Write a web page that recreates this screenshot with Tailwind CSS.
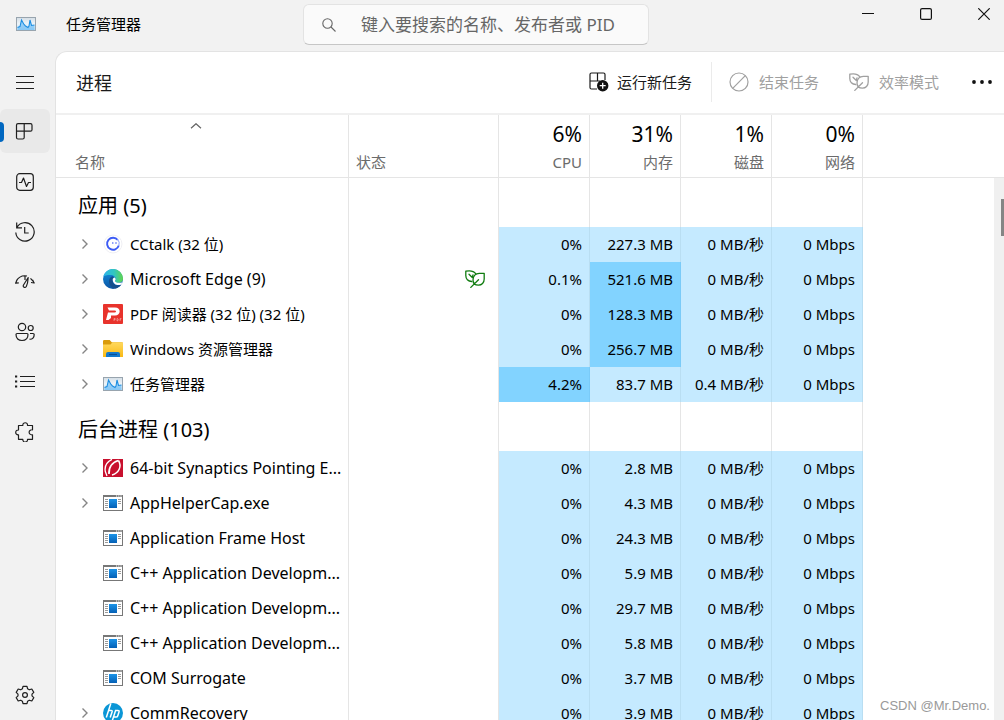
<!DOCTYPE html>
<html lang="zh-CN">
<head>
<meta charset="utf-8">
<title>任务管理器</title>
<script src="https://cdn.jsdelivr.net/npm/@tailwindcss/browser@4"></script>
</head>
<body class="h-screen overflow-hidden bg-[#f2f2f2] font-['Noto_Sans','Noto_Sans_CJK_SC',sans-serif] text-[15px] leading-5 text-black">

<svg class="absolute size-0" aria-hidden="true">
  <defs>
    <linearGradient id="gBlue" x1="0" y1="0" x2="0" y2="1"><stop offset="0" stop-color="#1c94e8"/><stop offset="1" stop-color="#0560b5"/></linearGradient>
    <linearGradient id="gGlass" x1="0" y1="0" x2="0" y2="1"><stop offset="0" stop-color="#d5dee6"/><stop offset=".5" stop-color="#edf4f9"/><stop offset="1" stop-color="#b5dcf7"/></linearGradient>
    <linearGradient id="gFolder" x1="0" y1="0" x2="0" y2="1"><stop offset="0" stop-color="#ffd95e"/><stop offset="1" stop-color="#f9b915"/></linearGradient>
    <linearGradient id="gEdge" x1="0" y1="0" x2="1" y2="0"><stop offset="0" stop-color="#2cb4ec"/><stop offset=".55" stop-color="#32c6c0"/><stop offset="1" stop-color="#62d64a"/></linearGradient>
    <linearGradient id="gEdgeB" x1="0" y1="0" x2="0" y2="1"><stop offset="0" stop-color="#1391e0"/><stop offset="1" stop-color="#0b54a4"/></linearGradient>

    <symbol id="taskmgr" viewBox="0 0 20 14">
      <rect x=".5" y=".5" width="19" height="13" fill="url(#gGlass)" stroke="#98a4ae"/>
      <path d="M1.5 10.5 4 9l1.5-6L8 8l2 1.5 2 1 1-1 1-6.5 1.5 5.5L18.5 8v5h-17z" fill="#6bbcf5" opacity=".65"/>
      <path d="M1.5 10.5 4 9.500l1.5-6.500L8 7.500l1.500 1.500 2.500 1.500 1-1.500 1-6 1.500 5.500 3-.5" fill="none" stroke="#1c8ee2" stroke-width="1.100"/>
    </symbol>
    <symbol id="cctalk" viewBox="0 0 20 20">
      <circle cx="10" cy="10" r="9" fill="#fff" stroke="#efeff3"/>
      <path d="M14.800 6A6 6 0 1 0 15.800 11.500" fill="none" stroke="#3d5cf5" stroke-width="1.900"/>
      <path d="M14.500 5.200a6.200 6.200 0 0 1 1.300 6.500" fill="none" stroke="#8ea2fb" stroke-width="1"/>
      <circle cx="9.800" cy="9" r=".8" fill="#3d5cf5"/><circle cx="13" cy="9" r=".8" fill="#3d5cf5"/>
    </symbol>
    <symbol id="edge" viewBox="0 0 20 20">
      <circle cx="10" cy="10" r="10" fill="url(#gEdgeB)"/>
      <path d="M.2 8A10 10 0 0 1 20 9.500c0 3-2.300 4.300-4.800 4.200-1.800 0-3.200-.7-3.200-1.300 0-.5.800-.8.800-2.200C12.800 8 10.500 6 7.500 6 4 6 1 6.500.2 8z" fill="url(#gEdge)"/>
      <path d="M9.200 7.300C5.500 9 5 13.500 8 17.500c1.500 1.700 3.800 2.400 5.500 1.700 2-.8 3.800-2.200 4.700-3.500-3 1.500-8 .8-8.500-2.700-.2-1.900.8-2.800 1.500-3.200 0-1.200-.8-2.300-2-2.500z" fill="#164f8c"/>
      <path d="M9.700 10.500c.1-1 .9-1.900 1.800-2 1 .7 1.500 1.700 1 2.600-.4.600-.8 1-.4 1.500 1 1.300 3.200 1.400 5.400 1.100 1-.2 1.700-.4 2-.7-.3 1.200-.8 2-1.300 2.500-3 1.500-8.300.4-8.500-5z" fill="#fff"/>
    </symbol>
    <symbol id="pdf" viewBox="0 0 20 20">
      <rect width="20" height="20" rx="1" fill="#e8332c"/>
      <path d="M4.500 3.500h7.500c6.500 0 6 8 0 8H8v2.500l-2.500 2H3l2-7.500h6.500c2 0 2-2 .2-2H6z" fill="#fff"/>
      <path d="M11 14.500v2.500m0-2.500h1.200v1.200H11m3-1.200v2.500c1.800 0 1.800-2.500 0-2.500m3 2.500v-2.500h1.500m-1.500 1.200h1" fill="none" stroke="#fff" stroke-width=".6" opacity=".6"/>
    </symbol>
    <symbol id="folder" viewBox="0 0 20 18">
      <path d="M0 1.200Q0 0 1.200 0h5.500l2 2.200H18.500Q20 2.200 20 3.600V9H0z" fill="#d99b0b"/>
      <path d="M0 4.500h7.500l2-2.300H19q1 0 1 1V17H0z" fill="url(#gFolder)"/>
      <path d="M3 17v-3q0-2 2-2h10q2 0 2 2v3z" fill="#1279cf"/>
      <path d="M6 14.500h8" stroke="#0a4f94" stroke-width="1.200"/>
    </symbol>
    <symbol id="syn" viewBox="0 0 20 18">
      <rect width="20" height="18" fill="#c8102e"/>
      <path d="M9 .3C3.500 3 1.500 8 2.300 12.500L4 17" fill="none" stroke="#fff" stroke-width="1.300"/>
      <path d="M15.500 1.500C9 3 5.500 8.500 6 15" fill="none" stroke="#fff" stroke-width="1.700"/>
      <path d="M15.500 1.500c3.500 6 .5 12.500-6.500 14.500" fill="none" stroke="#fff" stroke-width="1.500"/>
    </symbol>
    <symbol id="exe" viewBox="0 0 20 16">
      <rect x=".5" y=".5" width="19" height="15" fill="#fff" stroke="#777"/>
      <path d="M0 1h20" stroke="#777" stroke-width="2"/>
      <path d="M13 1h1.200M15.200 1h1.200M17.400 1h1.200" stroke="#fff" stroke-width="1"/>
      <path d="M2 4.500h3M2 6.500h3M2 8.500h3M2 10.500h3M2 12.500h3M15 4.500h3M15 6.500h3M15 8.500h3" stroke="#9a9a9a" stroke-width="1"/>
      <rect x="6" y="4" width="8" height="9" fill="url(#gBlue)"/>
    </symbol>
    <symbol id="hp" viewBox="0 0 20 20">
      <circle cx="10" cy="10" r="10" fill="#0a96d6"/>
      <path d="M7.800.5 3.300 14.500M5.600 7.500h2.500q1.400 0 1 1.300L7.200 14.500M8.700 19.500 12.600 7.400h2.300q1.600 0 1.100 1.500l-1.300 4q-.4 1.200-1.700 1.200h-2" fill="none" stroke="#fff" stroke-width="1.500"/>
    </symbol>
    <symbol id="leaf" viewBox="0 0 20 18">
      <g fill="none" stroke="currentColor" stroke-width="1.300" stroke-linecap="round" stroke-linejoin="round">
        <path d="M6.800 11.500C3 11.500.8 9 .8 5.500V1.200C5 .3 8.800 1 10.800 3.800"/>
        <path d="M4 4.200 7.300 7.500M8 4.800 7.300 7.500"/>
        <path d="M19.200 3.300V9c0 3.800-2.500 6.200-5.700 6.200-3.500 0-5.500-2.300-5.500-5.300 0-3.900 2.500-6.600 6.300-6.600zM5.800 17.400 13.500 9.800"/>
      </g>
    </symbol>
    <symbol id="chev" viewBox="0 0 8 12"><path d="M1.500 1.500 6 6l-4.500 4.500" fill="none" stroke="#858585" stroke-width="1.400"/></symbol>
  </defs>
</svg>

<div class="flex h-full flex-col">
  <header class="flex h-[51px] shrink-0 items-start">
    <div class="flex h-12 w-[303px] shrink-0 items-center gap-[30px] pl-4">
      <svg class="h-3.5 w-5"><use href="#taskmgr"/></svg>
      <h1>任务管理器</h1>
    </div>
    <label class="mt-1 flex h-[41px] w-[346px] items-center gap-[25px] rounded-md border border-[#e3e3e3] border-b-[#c6c6c6] bg-[#fafafa] pl-[18px]">
      <svg class="size-[14px] shrink-0" viewBox="0 0 14 14" fill="none" stroke="#666" stroke-width="1.100"><circle cx="5.500" cy="5.500" r="4.700"/><path d="m9 9 4.500 4.500"/></svg>
      <input type="text" aria-label="搜索" placeholder="键入要搜索的名称、发布者或 PID" class="w-full bg-transparent text-[17px] leading-6 outline-none placeholder:text-[#666]">
    </label>
    <div class="ml-auto flex gap-[46px] pt-2 pr-3.5">
      <button type="button" aria-label="最小化"><svg class="size-3" viewBox="0 0 12 12" stroke="#111" fill="none"><path d="M0 5.500h12"/></svg></button>
      <button type="button" aria-label="最大化"><svg class="size-3" viewBox="0 0 12 12" stroke="#111" fill="none"><rect x=".6" y=".6" width="10.800" height="10.800" rx="1.500" stroke-width="1.200"/></svg></button>
      <button type="button" aria-label="关闭"><svg class="size-3" viewBox="0 0 12 12" stroke="#111" fill="none"><path d="m.3.3 11.400 11.400M11.700.3.3 11.700" stroke-width="1.200"/></svg></button>
    </div>
  </header>

  <div class="flex min-h-0 flex-1">
    <nav class="flex w-[55px] shrink-0 flex-col gap-1.5 pt-2 pb-1 text-[#1f1f1f] [&>button]:pt-0.5" aria-label="导航">
      <button type="button" aria-label="展开导航" class="flex h-11 w-[50px] items-center justify-center"><svg class="size-5" viewBox="0 0 20 20" fill="none" stroke="currentColor" stroke-width="1.200"><path d="M1 4.500h18M1 10.500h18M1 16.500h18"/></svg></button>
      <button type="button" aria-label="进程" class="relative flex h-11 w-[50px] items-center justify-center rounded-md bg-[#e9e9e9]">
        <span class="absolute left-0 h-5 w-1 rounded-r-sm bg-[#0067c0]"></span>
        <svg class="size-5" viewBox="0 0 20 20" fill="none" stroke="currentColor" stroke-width="1.200"><path d="M3 1.700h12.500q1.500 0 1.500 1.500V7.700q0 1.500-1.500 1.500H9.200v6.300q0 1.500-1.500 1.500H3q-1.500 0-1.500-1.500V3.200Q1.500 1.700 3 1.700zM9.200 1.700v7.500H1.500"/></svg></button>
      <button type="button" aria-label="性能" class="flex h-11 w-[50px] items-center justify-center"><svg class="size-5" viewBox="0 0 20 20" fill="none" stroke="currentColor" stroke-width="1.200" stroke-linejoin="round"><rect x="1.700" y="1.700" width="16.600" height="16.600" rx="3"/><path d="M4 10.500h2.500l2-4.500 3 8.500 2-4H16"/></svg></button>
      <button type="button" aria-label="应用历史记录" class="flex h-11 w-[50px] items-center justify-center"><svg class="size-5" viewBox="0 0 20 20" fill="none" stroke="currentColor" stroke-width="1.200"><path d="M1.700.5v5.300H7M1.900 5.500A9.200 9.200 0 1 1 .8 10.500M9.700 5v6h4"/></svg></button>
      <button type="button" aria-label="启动应用" class="flex h-11 w-[50px] items-center justify-center"><svg class="size-5" viewBox="0 0 20 20" fill="none" stroke="currentColor" stroke-width="1.200" stroke-linejoin="round"><path d="M13.200 5.500 8.500 13c-1 2 1.500 3.500 2.800 1.500 1-2 1.700-5.500 1.900-9zM1.300 9C4 4.500 8 3.200 12 4M3.800 10.800.6 11.200 2.200 7.500M15.500 6.300 18.700 9.800M16 10.500l3.200.5L17.500 7.800M10 4v4"/></svg></button>
      <button type="button" aria-label="用户" class="flex h-11 w-[50px] items-center justify-center"><svg class="size-5" viewBox="0 0 20 20" fill="none" stroke="currentColor" stroke-width="1.200"><circle cx="7" cy="5" r="3.700"/><circle cx="15.700" cy="6" r="2.500"/><path d="M2 11.500h10q1 0 1 1c0 4-2.500 6-6 6s-6-2-6-6q0-1 1-1zM15 11.500h3q1.200 0 1.200 1c0 3-1.700 5-4.700 4.700"/></svg></button>
      <button type="button" aria-label="详细信息" class="flex h-11 w-[50px] items-center justify-center"><svg class="size-5" viewBox="0 0 20 20" fill="none" stroke="currentColor" stroke-width="1.200"><path d="M5 4.500h15M5 9.500h15M5 14.500h15"/><path d="M0 4.500h2.200M0 9.500h2.200M0 14.500h2.200" stroke-width="2"/></svg></button>
      <button type="button" aria-label="服务" class="flex h-11 w-[50px] items-center justify-center"><svg class="size-5" viewBox="0 0 20 20" fill="none" stroke="currentColor" stroke-width="1.200" stroke-linejoin="round"><path d="M3.500 3.500h4.300C7.500-.2 13 -.2 12.500 3.500h5v4.300c-4.500-.5-4.500 5.500 0 5v4.500h-5c.5 3.600-5 3.600-4.700 0H3.500v-4.500C-.2 13.200-.2 7.600 3.500 8z"/></svg></button>
      <button type="button" aria-label="设置" class="mt-auto flex h-11 w-[50px] items-center justify-center"><svg class="size-5" viewBox="0 0 20 20" fill="none" stroke="currentColor" stroke-width="1.200" stroke-linejoin="round"><path d="M8 1.300h4l.6 2.500 1.700 1 2.500-.8 2 3.400L17 9.200v1.600l1.800 1.800-2 3.400-2.500-.8-1.700 1-.6 2.500H8l-.6-2.500-1.700-1-2.500.8-2-3.400L3 10.800V9.200L1.200 7.400l2-3.400 2.500.8 1.700-1z"/><circle cx="10" cy="10" r="2.400"/></svg></button>
    </nav>

    <main class="flex min-w-0 flex-1 flex-col overflow-hidden rounded-tl-xl border-t border-l border-[#e3e3e3] bg-white">
      <div class="flex h-[63px] shrink-0 items-center border-b-2 border-[#f0f0f0] pl-5 text-[#1a1a1a]">
        <h2 class="text-[18px] leading-6">进程</h2>
        <div class="ml-auto flex items-center pr-3 pb-0.5">
          <button type="button" class="flex items-center gap-2 pr-[19px]">
            <svg class="size-5" viewBox="0 0 20 20" fill="none" stroke="currentColor" stroke-width="1.200"><path d="M8 17H2.500q-1.500 0-1.500-1.500v-13Q1 1 2.500 1h12Q16 1 16 2.500V8M8.500 1v8M1 9h10"/><circle cx="13.700" cy="13.700" r="5.700" fill="#111" stroke="none"/><path d="M13.700 10.700v6M10.700 13.700h6" stroke="#fff" stroke-width="1.300"/></svg>
            <span>运行新任务</span></button>
          <div class="h-10 w-px bg-[#ebebeb]"></div>
          <button type="button" disabled class="flex items-center gap-2.5 pl-[17px] text-[#a0a0a0]">
            <svg class="size-5" viewBox="0 0 20 20" fill="none" stroke="currentColor" stroke-width="1.200"><circle cx="10" cy="10" r="9"/><path d="M3.700 16.300 16.300 3.700"/></svg>
            <span>结束任务</span></button>
          <button type="button" disabled class="flex items-center gap-2.5 pl-[30px] text-[#a0a0a0]">
            <svg class="h-[18px] w-5"><use href="#leaf"/></svg>
            <span>效率模式</span></button>
          <button type="button" aria-label="更多" class="pl-[33px]"><svg class="h-1 w-5" viewBox="0 0 20 4" fill="#111"><circle cx="2" cy="2" r="1.900"/><circle cx="10" cy="2" r="1.900"/><circle cx="18" cy="2" r="1.900"/></svg></button>
        </div>
      </div>

      <div class="relative min-h-0 flex-1 overflow-hidden">
        <table class="w-full table-fixed border-separate border-spacing-0">
          <colgroup><col class="w-[293px]"><col class="w-[150px]"><col class="w-[91px]"><col class="w-[91px]"><col class="w-[91px]"><col class="w-[91px]"><col></colgroup>
          <thead>
            <tr class="h-[63px] text-[#6b6b6b] [&>*]:border-b [&>*]:border-[#e5e5e5] [&>*]:p-0 [&>*]:pb-[5px] [&>*]:align-bottom [&>*]:font-normal">
              <th scope="col" class="border-r text-left"><div class="flex h-[57px] flex-col justify-between pt-2 pl-[19px]"><svg class="ml-[115px] h-1.5 w-3" viewBox="0 0 12 6" fill="none" stroke="#666" stroke-width="1.200"><path d="m1 5.300 5-4.600 5 4.600"/></svg>名称</div></th>
              <th scope="col" class="border-r text-left"><div class="pl-[7px]">状态</div></th>
              <th scope="col" class="border-r text-right"><div class="pr-[7px]"><div class="pb-1 text-[21px] leading-7 text-black">6%</div>CPU</div></th>
              <th scope="col" class="border-r text-right"><div class="pr-[7px]"><div class="pb-1 text-[21px] leading-7 text-black">31%</div>内存</div></th>
              <th scope="col" class="border-r text-right"><div class="pr-[7px]"><div class="pb-1 text-[21px] leading-7 text-black">1%</div>磁盘</div></th>
              <th scope="col" class="border-r text-right"><div class="pr-[7px]"><div class="pb-1 text-[21px] leading-7 text-black">0%</div>网络</div></th>
              <td></td>
            </tr>
          </thead>
          <tbody id="rows"></tbody>
        </table>
        <div class="absolute top-[63px] right-0 bottom-0 w-2.5 bg-[#f0f0f0]"><div class="mt-[21px] ml-auto h-[37px] w-[3px] bg-[#858585]"></div></div>
        <p class="absolute right-3.5 bottom-1 font-['Liberation_Sans',sans-serif] text-[13px] leading-5 text-[#999]">CSDN @Mr.Demo.</p>
      </div>
    </main>
  </div>
</div>

<script>
// Each process: [icon, name, expandable, cpu, memory, disk, network, hot column, efficiency mode]
const groups = [
  ['应用 (5)', [
    ['cctalk', 'CCtalk (32 位)', 1, '0%', '227.3 MB', '0 MB/秒', '0 Mbps'],
    ['edge', 'Microsoft Edge (9)', 1, '0.1%', '521.6 MB', '0 MB/秒', '0 Mbps', 4, true],
    ['pdf', 'PDF 阅读器 (32 位) (32 位)', 1, '0%', '128.3 MB', '0 MB/秒', '0 Mbps', 4],
    ['folder', 'Windows 资源管理器', 1, '0%', '256.7 MB', '0 MB/秒', '0 Mbps', 4],
    ['taskmgr', '任务管理器', 1, '4.2%', '83.7 MB', '0.4 MB/秒', '0 Mbps', 3],
  ]],
  ['后台进程 (103)', [
    ['syn', '64-bit Synaptics Pointing E...', 1, '0%', '2.8 MB', '0 MB/秒', '0 Mbps'],
    ['exe', 'AppHelperCap.exe', 1, '0%', '4.3 MB', '0 MB/秒', '0 Mbps'],
    ['exe', 'Application Frame Host', 0, '0%', '24.3 MB', '0 MB/秒', '0 Mbps'],
    ['exe', 'C++ Application Developm...', 0, '0%', '5.9 MB', '0 MB/秒', '0 Mbps'],
    ['exe', 'C++ Application Developm...', 0, '0%', '29.7 MB', '0 MB/秒', '0 Mbps'],
    ['exe', 'C++ Application Developm...', 0, '0%', '5.8 MB', '0 MB/秒', '0 Mbps'],
    ['exe', 'COM Surrogate', 0, '0%', '3.7 MB', '0 MB/秒', '0 Mbps'],
    ['hp', 'CommRecovery', 1, '0%', '3.9 MB', '0 MB/秒', '0 Mbps'],
  ]],
];
const iconSize = { taskmgr: 'h-3.5 w-5', exe: 'h-4 w-5', folder: 'h-[18px] w-5', syn: 'h-[18px] w-5' };
const empty = '<td class="border-r border-[#e5e5e5]"></td>';
let html = '';
for (const [title, list] of groups) {
  html += `<tr class="h-[49px]"><th scope="rowgroup" class="border-r border-[#e5e5e5] p-0 pt-1.5 pl-[22px] text-left text-[20px] leading-7 font-normal">${title}</th>${empty.repeat(5)}<td></td></tr>`;
  for (const p of list) {
    const chevron = p[2] ? '<button type="button" aria-label="展开" class="flex w-2 justify-center"><svg class="h-3 w-2"><use href="#chev"/></svg></button>' : '<span class="w-2"></span>';
    // Names without Chinese characters are set one step larger
    const nameSize = /[\u4e00-\u9fff]/.test(p[1]) ? 'text-[15px]' : 'text-[16px]';
    html += `<tr class="h-[35px]"><td class="border-r border-[#e5e5e5] p-0 pb-0.5"><div class="flex items-center pl-[25px]">${chevron}<svg class="ml-3.5 shrink-0 ${iconSize[p[0]] || 'size-5'}"><use href="#${p[0]}"/></svg><span class="ml-[7px] whitespace-nowrap leading-5 ${nameSize}">${p[1]}</span></div></td>`;
    html += `<td class="border-r border-[#e5e5e5] p-0 pb-0.5">${p[8] ? '<svg class="mr-[13px] ml-auto h-[18px] w-5 text-[#107c10]"><use href="#leaf"/></svg>' : ''}</td>`;
    for (let c = 3; c < 7; c++) {
      html += `<td class="border-r p-0 pr-[7px] pb-0.5 text-right whitespace-nowrap ${p[7] === c ? 'border-[#7acbf8] bg-[#82d3ff]' : 'border-[#b9def2] bg-[#c5eaff]'}">${p[c]}</td>`;
    }
    html += '<td></td></tr>';
  }
}
document.getElementById('rows').innerHTML = html;
</script>
</body>
</html>
